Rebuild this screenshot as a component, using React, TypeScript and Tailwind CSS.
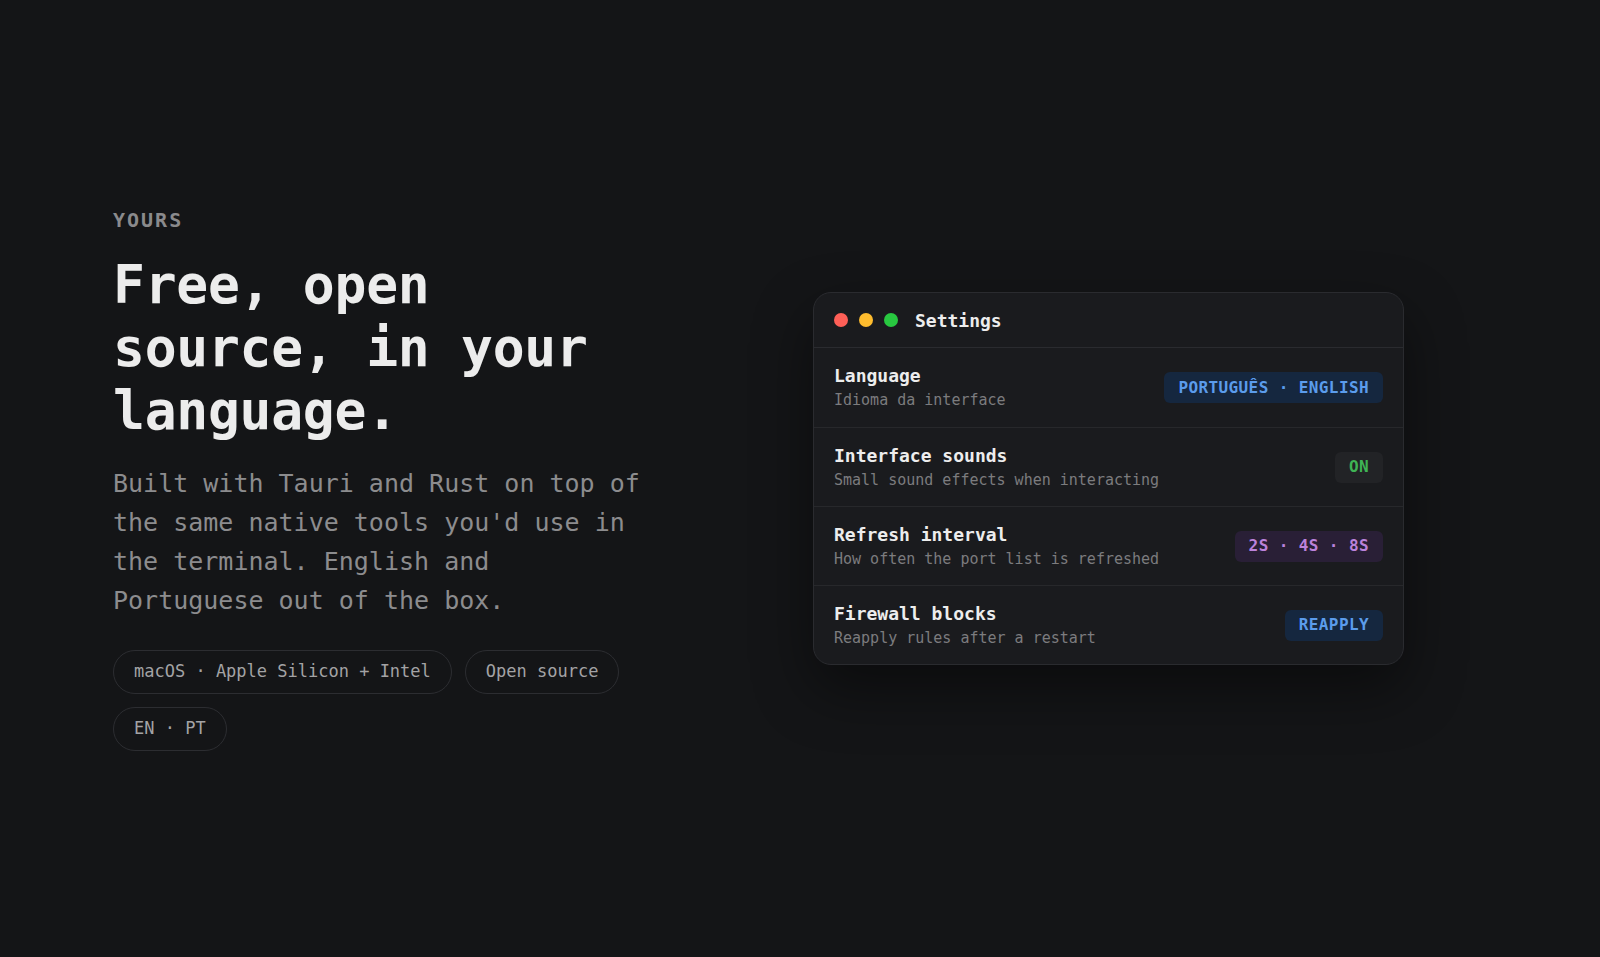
import React from "react";

const mono = "font-['DejaVu_Sans_Mono','Liberation_Mono',monospace]";

type Tone = "blue" | "green" | "purple";

const toneClasses: Record<Tone, string> = {
  blue: "bg-[#15273f] text-[#5b9cec]",
  green: "bg-[#222326] text-[#3fb455]",
  purple: "bg-[#291f36] text-[#bb82db]",
};

const settings: { title: string; hint: string; value: string; tone: Tone }[] = [
  { title: "Language", hint: "Idioma da interface", value: "PORTUGUÊS · ENGLISH", tone: "blue" },
  { title: "Interface sounds", hint: "Small sound effects when interacting", value: "ON", tone: "green" },
  { title: "Refresh interval", hint: "How often the port list is refreshed", value: "2S · 4S · 8S", tone: "purple" },
  { title: "Firewall blocks", hint: "Reapply rules after a restart", value: "REAPPLY", tone: "blue" },
];

const tags = ["macOS · Apple Silicon + Intel", "Open source", "EN · PT"];

const SettingsWindow = () => {
  return (
    <div className="w-[591px] shrink-0 rounded-[18px] border border-[#2a2b2f] bg-[#1a1b1e] shadow-[0_24px_60px_rgba(0,0,0,0.45)]">
      <div className="flex h-[55px] items-center px-5 border-b border-[#2a2b2f]">
        <div className="flex items-center gap-[11px]">
          <span className="w-[14px] h-[14px] rounded-full bg-[#fe5f57]"></span>
          <span className="w-[14px] h-[14px] rounded-full bg-[#febc2e]"></span>
          <span className="w-[14px] h-[14px] rounded-full bg-[#28c840]"></span>
        </div>
        <span className="ml-[17px] text-[18px] font-bold text-[#ededed]">Settings</span>
      </div>

      {settings.map((row, index) => (
        <div
          key={row.title}
          className={`flex h-[79px] items-center justify-between px-5 ${
            index > 0 ? "border-t border-[#27282b]" : ""
          }`}
        >
          <div className="flex flex-col gap-[2px]">
            <span className="text-[18px] leading-[23px] font-bold text-[#ededed]">{row.title}</span>
            <span className="text-[15px] leading-[22px] text-[#7c7c7e]">{row.hint}</span>
          </div>
          <span
            className={`flex h-[31px] items-center rounded-[6px] px-[14px] text-[16px] font-bold tracking-[0.025em] ${toneClasses[row.tone]}`}
          >
            {row.value}
          </span>
        </div>
      ))}
    </div>
  );
};

export default function App() {
  return (
    <main className={`min-h-screen w-full bg-[#141517] ${mono} flex items-center`}>
      <div className="flex items-center gap-[165px] pl-[113px]">
        <div className="w-[535px] shrink-0">
          <p className="text-[20px] font-bold tracking-[0.1em] text-[#8a8a8c] leading-[28px]">YOURS</p>
          <h1 className="mt-[19px] text-[53px] leading-[63px] font-bold tracking-[-0.005em] text-[#ececec]">
            Free, open source, in your language.
          </h1>
          <p className="mt-[22px] text-[25px] leading-[39px] text-[#8c8c8e]">
            Built with Tauri and Rust on top of the same native tools you'd use in the terminal. English and
            Portuguese out of the box.
          </p>
          <div className="mt-[30px] flex flex-wrap gap-x-[13px] gap-y-[13px]">
            {tags.map((tag) => (
              <span
                key={tag}
                className="flex h-[44px] items-center rounded-full border border-[#2c2d31] px-5 text-[17px] text-[#a3a3a5]"
              >
                {tag}
              </span>
            ))}
          </div>
        </div>

        <SettingsWindow />
      </div>
    </main>
  );
}
